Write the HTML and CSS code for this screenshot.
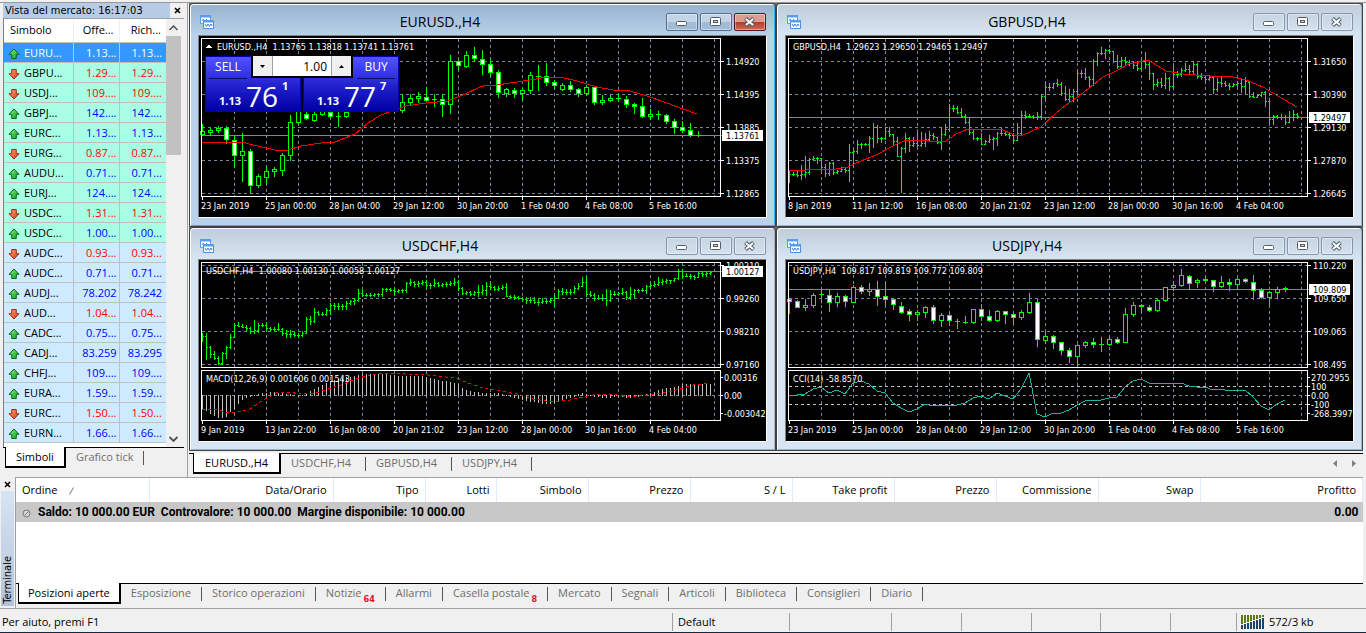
FILE: index.html
```html
<!DOCTYPE html>
<html lang="it">
<head>
<meta charset="utf-8">
<title>Terminale di trading</title>
<link rel="stylesheet" href="styles.css">
</head>
<body>
<svg class="defs" width="0" height="0" aria-hidden="true">
  <defs>
    <linearGradient id="g-up" x1="0" y1="0" x2="1" y2="1"><stop offset="0" stop-color="#8af08a"/><stop offset="1" stop-color="#0a9a1e"/></linearGradient>
    <linearGradient id="g-down" x1="0" y1="0" x2="1" y2="1"><stop offset="0" stop-color="#ffa078"/><stop offset="1" stop-color="#d83a10"/></linearGradient>
    <symbol id="up" viewBox="0 0 12 12"><path d="M6 1 11 6.300H8.300V10.500H3.700V6.300H1z" fill="url(#g-up)" stroke="#0b6b17" stroke-linejoin="round"/></symbol>
    <symbol id="down" viewBox="0 0 12 12"><path d="M6 11 11 5.700H8.300V1.500H3.700V5.700H1z" fill="url(#g-down)" stroke="#a03010" stroke-linejoin="round"/></symbol>
    <symbol id="chart" viewBox="0 0 14 14">
      <path d="M.5 1.500h10v7H.5z" fill="#fff" stroke="#5b9be8"/><path d="M0 0h11v2.500H0z" fill="#5b9be8"/><path d="M2 5h1l1-1M6 4l1 1" stroke="#3d7fe0" fill="none"/>
      <path d="M3.500 6h10v7.500h-10z" fill="#fff" stroke="#4d8ee6"/><path d="M3 5h11v2.500H3z" fill="#5b9be8"/><path d="M5 9l1.500 2.500L8 9l1.500 2.500L11 9l1 2" stroke="#3d7fe0" fill="none"/>
    </symbol>
    <symbol id="min" viewBox="0 0 30 16"><rect x="9.500" y="7.500" width="10" height="4" rx="1" fill="#fff" stroke="#555b66"/></symbol>
    <symbol id="max" viewBox="0 0 30 16"><rect x="9.500" y="3.500" width="10" height="8" rx="1" fill="#fff" stroke="#555b66"/><rect x="12.500" y="6.500" width="4" height="2" fill="#c5d2e0" stroke="#555b66"/></symbol>
    <symbol id="close" viewBox="0 0 30 16"><path d="M10.500 4.500 18.500 11.500M18.500 4.500 10.500 11.500" stroke="#555b66" stroke-width="4"/><path d="M10.900 4.900 18.100 11.100M18.100 4.900 10.900 11.100" stroke="#fff" stroke-width="2"/></symbol>
    <symbol id="x" viewBox="0 0 7 7"><path d="M1 1l5 5M6 1 1 6" stroke="#000" stroke-width="1.600"/></symbol>
  </defs>
</svg>

<div class="app">
  <div class="toolbar-edge"></div>
  <main class="workspace">
    <aside class="watch">
      <div class="watch-title"><span>Vista del mercato: 16:17:03</span><button type="button" aria-label="Chiudi"><svg width="7" height="7"><use href="#x"/></svg></button></div>
      <div class="watch-body">
        <table class="watch-table">
          <colgroup><col class="c-symbol"><col class="c-bid"><col class="c-ask"></colgroup>
          <thead><tr><th>Simbolo</th><th>Offe...</th><th>Rich...</th></tr></thead>
          <tbody id="quotes"></tbody>
        </table>
        <div class="scroll">
          <svg width="9" height="6" viewBox="0 0 9 6"><path d="M.5 5 4.500 1l4 4" fill="none" stroke="#505050" stroke-width="1.500"/></svg>
          <div class="thumb"></div>
          <svg width="9" height="6" viewBox="0 0 9 6"><path d="M.5 1 4.500 5l4-4" fill="none" stroke="#505050" stroke-width="1.800"/></svg>
        </div>
      </div>
      <nav class="tabs watch-tabs"><button type="button" class="tab on">Simboli</button><button type="button" class="tab">Grafico tick</button></nav>
    </aside>

    <section class="charts">
      <div class="windows">
        <article class="win active">
          <header><svg class="wicon" width="14" height="14"><use href="#chart"/></svg><h2>EURUSD.,H4</h2><div class="wbtns"><button type="button" aria-label="Riduci"><svg><use href="#min"/></svg></button><button type="button" aria-label="Ingrandisci"><svg><use href="#max"/></svg></button><button type="button" class="wclose" aria-label="Chiudi"><svg><use href="#close"/></svg></button></div></header>
          <div class="frame">
            <svg class="plot" id="eurusd"></svg>
            <div class="trade">
              <button type="button" class="deal"><span class="side">SELL</span><span class="quote">1.13 <b>76</b><sup>1</sup></span></button>
              <button type="button" class="deal buy"><span class="side">BUY</span><span class="quote">1.13 <b>77</b><sup>7</sup></span></button>
              <div class="volume"><button type="button" aria-label="Diminuisci"><svg width="5" height="3"><path d="M0 0h5L2.500 3z"/></svg></button><input type="text" value="1.00" aria-label="Volume"><button type="button" aria-label="Aumenta"><svg width="5" height="3"><path d="M0 3h5L2.500 0z"/></svg></button></div>
            </div>
          </div>
        </article>
        <article class="win">
          <header><svg class="wicon" width="14" height="14"><use href="#chart"/></svg><h2>GBPUSD,H4</h2><div class="wbtns"><button type="button" aria-label="Riduci"><svg><use href="#min"/></svg></button><button type="button" aria-label="Ingrandisci"><svg><use href="#max"/></svg></button><button type="button" aria-label="Chiudi"><svg><use href="#close"/></svg></button></div></header>
          <div class="frame"><svg class="plot" id="gbpusd"></svg></div>
        </article>
        <article class="win">
          <header><svg class="wicon" width="14" height="14"><use href="#chart"/></svg><h2>USDCHF,H4</h2><div class="wbtns"><button type="button" aria-label="Riduci"><svg><use href="#min"/></svg></button><button type="button" aria-label="Ingrandisci"><svg><use href="#max"/></svg></button><button type="button" aria-label="Chiudi"><svg><use href="#close"/></svg></button></div></header>
          <div class="frame"><svg class="plot" id="usdchf"></svg></div>
        </article>
        <article class="win">
          <header><svg class="wicon" width="14" height="14"><use href="#chart"/></svg><h2>USDJPY,H4</h2><div class="wbtns"><button type="button" aria-label="Riduci"><svg><use href="#min"/></svg></button><button type="button" aria-label="Ingrandisci"><svg><use href="#max"/></svg></button><button type="button" aria-label="Chiudi"><svg><use href="#close"/></svg></button></div></header>
          <div class="frame"><svg class="plot" id="usdjpy"></svg></div>
        </article>
      </div>
      <nav class="tabs chart-tabs">
        <button type="button" class="tab on">EURUSD.,H4</button><button type="button" class="tab">USDCHF,H4</button><button type="button" class="tab">GBPUSD,H4</button><button type="button" class="tab">USDJPY,H4</button>
        <span class="arrows"><svg width="4" height="7"><path d="M4 0v7L0 3.500z" fill="#808080"/></svg><svg width="4" height="7"><path d="M0 0v7l4-3.500z" fill="#808080"/></svg></span>
      </nav>
    </section>
  </main>

  <section class="terminal">
    <div class="side-strip"><button type="button" aria-label="Chiudi terminale"><svg width="7" height="7"><use href="#x"/></svg></button><div class="side-name"><span>Terminale</span></div></div>
    <div class="terminal-main">
      <div class="orders-area">
        <table class="orders">
          <colgroup><col class="w133"><col class="w184"><col class="w92"><col class="w71"><col class="w92"><col class="w102"><col class="w102"><col class="w102"><col class="w102"><col class="w102"><col class="w102"><col></colgroup>
          <thead><tr><th class="first">Ordine<svg class="sort" width="5" height="8"><path d="M.5 7.500 4.500.5" stroke="#777"/></svg></th><th>Data/Orario</th><th>Tipo</th><th>Lotti</th><th>Simbolo</th><th>Prezzo</th><th>S / L</th><th>Take profit</th><th>Prezzo</th><th>Commissione</th><th>Swap</th><th>Profitto</th></tr></thead>
          <tbody><tr><td class="balance" colspan="11"><svg class="dot" width="9" height="9" viewBox="0 0 9 9"><circle cx="4.500" cy="4.500" r="3.500" fill="#d6d6d6" stroke="#777"/><path d="M2.500 6.500l4-4" stroke="#777"/></svg>Saldo: 10 000.00 EUR&nbsp; Controvalore: 10 000.00&nbsp; Margine disponibile: 10 000.00</td><td class="profit">0.00</td></tr></tbody>
        </table>
      </div>
      <nav class="tabs term-tabs">
        <button type="button" class="tab on">Posizioni aperte</button><button type="button" class="tab">Esposizione</button><button type="button" class="tab">Storico operazioni</button><button type="button" class="tab">Notizie<sub>64</sub></button><button type="button" class="tab">Allarmi</button><button type="button" class="tab">Casella postale<sub>8</sub></button><button type="button" class="tab">Mercato</button><button type="button" class="tab">Segnali</button><button type="button" class="tab">Articoli</button><button type="button" class="tab">Biblioteca</button><button type="button" class="tab">Consiglieri</button><button type="button" class="tab">Diario</button>
      </nav>
    </div>
  </section>

  <footer class="status">
    <span class="help">Per aiuto, premi F1</span><span class="profile">Default</span><span class="s102"></span><span class="s71"></span><span class="s71"></span><span class="s68"></span><span class="s71"></span><span class="s66"></span>
    <span class="net"><svg id="signal" width="24" height="14"></svg>572/3 kb</span>
  </footer>
</div>
<script src="charts.js"></script>
</body>
</html>
```
FILE: styles.css
```css
* { box-sizing: border-box; }
body { margin: 0; background: #f0f0f0; color: #000; font: 11px/16px "Open Sans", "Noto Sans", sans-serif; }
button { font: inherit; color: inherit; padding: 0; border: 0; background: none; }
.defs { position: absolute; }
.app { display: flex; flex-direction: column; min-height: 100vh; border-bottom: 1px solid #14283c; }
.toolbar-edge { height: 3px; background: #f0f0f0; border-bottom: 1px solid #9a9a9a; }
.workspace { display: flex; }

/* market watch */
.watch { flex: 0 0 188px; display: flex; flex-direction: column; padding-left: 3px; padding-right: 3px; border-right: 1px solid #a0a0a0; }
.watch-title { display: flex; height: 15px; font: 11px/15px "DejaVu Sans Condensed", sans-serif; }
.watch-title span { flex: 1; padding-left: 2px; background: #b6cce6; white-space: nowrap; }
.watch-title button { width: 14px; display: grid; place-items: center; }
.watch-body { flex: 1; display: flex; border-left: 1px solid #808080; border-top: 1px solid #a0a0a0; background: #fff; }
.watch-table { width: 162px; table-layout: fixed; border-collapse: collapse; font-size: 11px; align-self: flex-start; }
.c-symbol { width: 69px; }
.c-bid { width: 46px; }
.c-ask { width: 47px; }
.watch-table th { height: 23px; padding: 0 5px 0 6px; font-weight: 400; text-align: left; border-bottom: 1px solid #c0c0c0; border-right: 1px solid #e8f0f8; }
.watch-table th + th { text-align: right; }
.watch-table th:last-child { border-right: 0; }
.watch-table td { height: 20px; padding: 0 2px 0 0; line-height: 19px; white-space: nowrap; text-align: right; border: 0 solid #c0c0c0; border-width: 0 1px 1px 0; background: #a9ffe3; }
.watch-table td:first-child { text-align: left; }
.watch-table td:last-child { border-right: 0; padding-right: 4px; }
.watch-table svg { width: 12px; height: 12px; margin: 0 4px 0 4px; vertical-align: -3px; }
.watch-table tr.blue td { background: #cdeaff; }
.watch-table tr.sel td { background: #3399ff; color: #fff; }
.watch-table tr.rise td + td { color: #0000ff; }
.watch-table tr.fall td + td { color: #ff0000; }
.watch-table tr.sel td + td { color: #fff; }
.scroll { flex: 1; display: flex; flex-direction: column; align-items: center; padding: 6px 3px 5px 0; background: #f0f0f0; }
.thumb { width: 15px; height: 119px; margin-top: 5px; background: #c1c1c1; }
.scroll svg:last-child { margin-top: auto; }

/* tab strips */
.tabs { display: flex; border-top: 1px solid #000; color: #6e6e6e; line-height: 18px; }
.tab { padding: 0 11px 3px 10px; height: 19px; white-space: nowrap; position: relative; }
.tab:not(.on)::after { content: ""; position: absolute; right: 0; top: 3px; bottom: 2px; width: 1px; background: #555; }
.tab.on { margin-top: -1px; height: 21px; padding: 0 9px; border: 1px solid #000; border-top: 0; border-bottom-width: 2px; border-right-width: 2px; background: #fff; color: #000; }
.tab sub { position: relative; top: 5px; margin-left: 2px; vertical-align: baseline; font: bold 9px/9px "DejaVu Sans Condensed", sans-serif; color: #e81123; }
.watch-tabs { height: 30px; padding-left: 2px; }
.watch-tabs .tab.on { padding: 0 10px; }
.term-tabs { height: 25px; padding-left: 2px; }

/* chart windows */
.charts { flex: 1; min-width: 0; padding: 0 3px 0 1px; background: #f0f0f0; }
.windows { display: grid; grid-template-columns: 1fr 1fr; background: #666; margin-bottom: 2px; }
.win { min-width: 0; display: flex; flex-direction: column; padding: 0 8px 8px; border: 1px solid #3e4247; box-shadow: inset 1px 1px #fff, inset -1px -1px #9fb4c8; border-radius: 4px 4px 0 0; background: linear-gradient(#bfcdda, #d7e4f2 31px); }
.win.active { box-shadow: inset 1px 1px #fff, inset -1px -1px #2fb6d8; background: linear-gradient(#98b2cf, #b9d1ea 31px); }
.win header { display: flex; align-items: center; height: 31px; padding: 5px 1px 0 2px; }
.wicon { flex: none; }
.win h2 { flex: 1; margin: 0; text-align: center; font-size: 14px; font-weight: 400; line-height: 20px; }
.wbtns { display: flex; gap: 2px; }
.wbtns button { width: 32px; height: 18px; border: 1px solid #8496ad; border-radius: 2px; box-shadow: inset 0 0 0 1px #ffffff66; }
.active .wbtns button { border-color: #53708f; background: linear-gradient(#c2d4e6 50%, #a3bcd6 50%); }
.active .wbtns .wclose { border-color: #5a1320; background: linear-gradient(#dc9c90 50%, #b8382c 50%, #d06a50); }
.wbtns svg { display: block; width: 30px; height: 16px; }
.frame { position: relative; border: 1px solid #808080; border-right-color: #fff; border-bottom-color: #fff; background: #000; }
.plot { display: block; width: 100%; height: 181px; font: 9px "DejaVu Sans Condensed", "DejaVu Sans", sans-serif; fill: #fff; shape-rendering: crispEdges; }
.plot text { white-space: pre; }
.chart-tabs { padding-left: 4px; height: 24px; }
.chart-tabs .tab { padding: 0 15px 3px 10px; }
.chart-tabs .tab.on { padding: 0 11px; }
.arrows { margin-left: auto; display: flex; align-items: center; gap: 15px; padding: 0 7px 5px 0; }

/* one-click trading */
.trade { position: absolute; left: 6px; top: 20px; display: flex; gap: 2px; background: #000; color: #fff; }
.deal { width: 96px; height: 56px; display: flex; flex-direction: column; justify-content: space-between; border: 1px solid #0000b0; background: linear-gradient(#5252ff, #2020cc 55%, #0000a4); text-align: left; }
.side { width: 38px; margin-left: 3px; height: 22px; line-height: 20px; font-size: 12px; text-align: center; border-bottom: 1px solid #0b0b70; }
.buy .side { align-self: flex-end; margin-right: 3px; }
.quote { display: flex; align-items: flex-end; height: 32px; padding-left: 13px; font: bold 11px/20px "Open Sans", sans-serif; }
.quote b { margin-left: 5px; font-size: 28px; font-weight: 400; line-height: 30px; }
.quote sup { align-self: flex-start; margin: -1px 0 0 4px; font-size: 11px; line-height: 16px; }
.volume { position: absolute; left: 46px; top: 0; display: flex; width: 102px; height: 22px; border: 2px solid #000; border-top: 0; }
.volume button { width: 19px; display: grid; place-items: center; background: #f0f0f0; }
.volume input { flex: 1; min-width: 0; padding: 0 4px 0 0; border: 1px solid #a0a0a0; border-width: 0 1px; text-align: right; font: 12px "Open Sans", sans-serif; }

/* terminal */
.terminal { flex: 1; display: flex; padding-right: 3px; border-bottom: 1px solid #a0a0a0; }
.side-strip { width: 16px; display: flex; flex-direction: column; padding: 0 1px 2px; border-right: 1px solid #a0a0a0; }
.side-strip button { height: 14px; display: grid; place-items: center; }
.side-name { flex: 1; display: flex; align-items: flex-end; justify-content: center; padding-bottom: 2px; background: linear-gradient(#d6e4f4, #b4c4d8); }
.side-name span { writing-mode: vertical-rl; transform: rotate(180deg); font: 11px/12px "DejaVu Sans Condensed", sans-serif; }
.terminal-main { flex: 1; min-width: 0; display: flex; flex-direction: column; border-top: 1px solid #a0a0a0; }
.orders-area { flex: 1; background: #fff; }
.orders { width: 100%; table-layout: fixed; border-collapse: collapse; }
.w133 { width: 133px; }
.w184 { width: 184px; }
.w92 { width: 92px; }
.w71 { width: 71px; }
.w102 { width: 102px; }
.orders th { height: 24px; padding: 0 6px; font-weight: 400; text-align: right; white-space: nowrap; border-right: 1px solid #e2ecf8; }
.orders th.first { text-align: left; }
.sort { margin-left: 12px; vertical-align: -1px; }
.orders td { height: 20px; padding: 0 4px 0 6px; font: 700 12px/20px Roboto, "Open Sans", sans-serif; background: #c8c8c8; }
.dot { margin-right: 7px; vertical-align: -2px; }
.orders .profit { text-align: right; }

/* status bar */
.status { display: flex; height: 23px; padding: 4px 0 1px; line-height: 18px; }
.status span { border-left: 1px solid #a0a0a0; }
.status .help { flex: 1; padding-left: 2px; border: 0; }
.status .profile { width: 117px; padding-left: 5px; }
.s102 { width: 102px; }
.s71 { width: 70px; }
.s68 { width: 69px; }
.s66 { width: 66px; }
.status .net { width: 130px; display: flex; align-items: center; gap: 4px; padding-left: 4px; }
```
FILE: charts.js
```js
const NS = 'http://www.w3.org/2000/svg';
const LIME = '#00ff00', GRID = '#778899';

function add(svg, tag, attrs, text) {
  const e = document.createElementNS(NS, tag);
  for (const k in attrs) e.setAttribute(k, attrs[k]);
  if (text !== undefined) e.textContent = text;
  svg.appendChild(e);
}
const rect = (s, x, y, w, h, fill) => add(s, 'rect', { x, y, width: w, height: h, fill });
const label = (s, x, y, t, fill) => add(s, 'text', { x, y, fill: fill || '#fff' }, t);

// Grid, panes, axes; every plot is 519px wide and 158px high.
function base(id, o) {
  const s = document.getElementById(id);
  const dash = (x1, y1, x2, y2, c) => add(s, 'line', { x1, y1, x2, y2, stroke: c || GRID, 'stroke-dasharray': '3 3' });
  for (let x = 35; x < 520; x += 32) dash(x + .5, 3, x + .5, 160);
  o.prices.forEach(p => dash(3, p[1] + .5, 521, p[1] + .5));
  (o.levels || []).forEach(l => dash(3, l[0] + .5, 521, l[0] + .5, l[1]));
  rect(s, 3, o.bid[1], 520, 1, GRID);
  return s;
}
function finish(s, o) {
  const box = (y, h) => add(s, 'rect', { x: 2.5, y: y + .5, width: 519, height: h, fill: 'none', stroke: '#fff' });
  if (o.sub) {
    box(2, 105);
    box(110, 50);
    rect(s, 0, 108, 567, 2, '#000');
    o.sub.labels.forEach(l => { rect(s, 522, l[1], 2, 1, '#fff'); label(s, 525, l[1] + 4, l[0]); });
    label(s, 7, 122, o.sub.title);
  } else box(2, 158);
  o.prices.forEach(p => { rect(s, 522, p[1], 3, 1, '#fff'); label(s, 527, p[1] + 4, p[0]); });
  rect(s, 523, o.bid[1] - 5, 41, 11, '#fff');
  label(s, 527, o.bid[1] + 4, o.bid[0], '#000');
  o.times.forEach((t, i) => { rect(s, 3 + 64 * i, 160, 1, 4, '#fff'); label(s, 2 + 64 * i, 173, t); });
  label(s, o.titleX || 7, 14, o.title);
}
const line = (s, pts, color, extra) => add(s, 'polyline', Object.assign({ points: pts, fill: 'none', stroke: color }, extra));

// Candle: high, body top, body bottom, low; kind u = rising, f = falling, d = doji
function candles(s, data) {
  data.trim().split(/\s+/).forEach((c, i) => {
    if (c === '-') return;
    const [h, t, b, l] = c.slice(1).split(',').map(Number), x = 3 + 8 * i, k = c[0];
    rect(s, x, h, 1, l - h + 1, LIME);
    if (k === 'd') { rect(s, x - 2, t, 5, 1, LIME); return; }
    rect(s, x - 2, t, 5, b - t + 1, LIME);
    rect(s, x - 1, t + 1, 3, b - t - 1, k === 'u' ? '#000' : '#fff');
  });
}
// Bar: high, low, close
function bars(s, data) {
  let prev = null;
  data.trim().split(/\s+/).forEach((c, i) => {
    const [h, l, cl] = c.split(',').map(Number), x = 3 + 4 * i;
    rect(s, x, h, 1, l - h + 1, LIME);
    rect(s, x + 1, cl, 1, 1, LIME);
    if (prev !== null) rect(s, x - 1, Math.min(Math.max(prev, h), l), 1, 1, LIME);
    prev = cl;
  });
}

const T1 = ['23 Jan 2019', '25 Jan 00:00', '28 Jan 04:00', '29 Jan 12:00', '30 Jan 20:00', '1 Feb 04:00', '4 Feb 08:00', '5 Feb 16:00'];
const T2 = ['11 Jan 12:00', '16 Jan 08:00', '20 Jan 21:02', '23 Jan 12:00', '28 Jan 00:00', '30 Jan 16:00', '4 Feb 04:00'];

// EURUSD
let o = { title: 'EURUSD.,H4  1.13765 1.13818 1.13741 1.13761', titleX: 18, bid: ['1.13761', 99], times: T1,
  prices: [['1.14920', 25], ['1.14395', 58], ['1.13885', 91], ['1.13375', 124], ['1.12865', 157]] };
let s = base('eurusd', o);
candles(s, `u88,95,98,99 u92,94,96,99 u90,92,94,96 f90,92,103,107 f99,104,119,130 u97,115,119,145 f113,115,149,156 u138,140,149,151
 u131,135,141,146 u131,133,135,140 u117,119,134,139 u79,86,119,124 u70,74,86,87 f74,78,82,83 u74,78,84,85 u70,75,78,79 f72,76,80,81 d72,80,81,90 u72,76,80,81
 - - - - - - u58,66,74,76 u58,62,66,69 u56,60,62,66 f51,61,64,66 d58,63,64,70 f58,63,68,80 u19,25,68,77 f24,25,29,33 u15,19,30,31 f11,19,22,24 f14,23,28,38
 f23,28,36,39 f34,36,56,61 u52,53,57,60 f52,54,57,61 u52,54,57,63 u36,39,54,57 d29,40,41,54 f27,40,46,49 f44,46,49,52 u47,49,53,54 f45,49,53,55 f52,53,57,60
 u49,51,57,59 f50,51,66,68 u59,64,66,68 u59,62,64,65 d58,62,63,64 f60,63,68,71 f67,68,70,77 f62,70,80,81 u73,78,80,83 d75,78,79,83 f78,79,85,87 f83,85,91,97
 f85,91,94,96 f87,94,99,100 d95,99,100,100`);
line(s, '3,107 11,106 44,106 50,108 76,114 89,114 102,110 122,107 136,106 156,98 169,87 182,79 207,70 227,67 249,65 266,58 281,51 288,49 298,49 311,47 331,44 348,41 361,41 378,45 398,51 414,54 431,55 448,60 468,67 484,73 498,78', '#f00');
add(s, 'path', { d: 'M6 12h7L9.500 8.500z', fill: '#fff' });
finish(s, o);

// GBPUSD
o = { title: 'GBPUSD,H4  1.29623 1.29650 1.29465 1.29497', bid: ['1.29497', 81], times: ['8 Jan 2019', ...T2],
  prices: [['1.31650', 25], ['1.30390', 58], ['1.29130', 91], ['1.27870', 124], ['1.26645', 157]] };
s = base('gbpusd', o);
bars(s, `134,146,138 136,139,138 135,140,139 129,143,138 120,141,136 122,138,123 120,124,122 121,127,122 122,134,131 128,140,137 126,139,127 126,138,136
 134,137,135 131,135,133 131,136,134 108,145,116 113,130,115 104,117,108 107,112,108 107,109,108 100,116,102 87,111,91 89,106,102 101,106,102 91,103,95 91,100,98 98,109,105 101,120,120
 111,156,112 97,116,102 101,115,109 101,110,107 96,110,109 96,110,107 97,110,103 95,104,99 97,103,100 101,107,106 91,113,98 88,99,93 68,94,72 69,75,72 70,77,76 72,81,80 78,87,86 82,98,96
 93,103,102 101,104,102 97,108,108 104,108,105 99,106,103 101,113,102 96,109,97 92,99,97 95,99,98 96,102,99 97,106,104 87,104,97 75,98,79 75,82,80 78,81,80 79,82,81 76,83,80 59,83,60
 46,65,51 47,54,51 47,52,47 43,50,48 46,59,57 50,64,63 53,65,60 53,65,55 34,58,37 34,41,37 32,43,41 40,51,43 23,49,25 16,29,17 11,18,17 13,22,14 13,17,15 15,26,25 19,32,30 21,32,24
 21,29,26 24,29,27 25,32,29 27,34,32 21,33,25 16,32,28 25,43,37 37,53,48 43,50,46 42,51,49 37,52,42 41,54,50 30,53,38 35,41,38 32,40,34 27,35,33 29,37,35 26,37,28 27,42,40 37,43,41
 39,47,43 39,44,41 41,57,53 42,55,46 41,50,47 45,50,49 47,53,50 47,50,48 46,50,47 43,56,50 41,57,45 46,61,60 56,61,61 58,61,59 56,60,56 55,70,65 62,87,83 79,88,80 79,82,81 78,83,81
 79,88,86 75,86,81 74,84,78 77,82,80`);
line(s, '3,134 20,134 30,133 50,133 62,131 70,127 90,119 107,110 118,105 130,104 143,105 160,105 170,98 182,93 215,93 228,99 235,100 255,91 270,77 280,69 293,60 317,41 330,35 343,28 362,24 380,35 397,38 423,40 447,41 460,44 477,51 497,63 511,71', '#f00');
finish(s, o);

// USDCHF with MACD
o = { title: 'USDCHF,H4  1.00080 1.00130 1.00058 1.00127', bid: ['1.00127', 11], times: ['9 Jan 2019', '13 Jan 22:00', ...T2.slice(1)],
  prices: [['1.00210', 5], ['0.99260', 38], ['0.98210', 71], ['0.97160', 104]], levels: [[135, GRID]],
  sub: { title: 'MACD(12,26,9) 0.001606 0.001543', labels: [['0.00316', 117], ['0.00', 135], ['-0.003042', 153]] } };
s = base('usdchf', o);
bars(s, `73,81,76 73,99,87 86,97,94 91,99,98 96,104,103 92,104,93 86,98,87 74,88,77 63,77,65 62,66,66 64,67,67 65,70,68 67,73,71 60,73,70 63,72,65 63,66,65 62,70,68 67,70,69 67,70,69
 63,70,69 68,75,73 70,77,74 70,77,74 72,76,75 73,77,75 71,76,73 57,73,59 56,64,61 48,62,52 51,55,54 52,55,54 48,55,50 43,54,45 43,49,46 43,49,46 44,49,46 41,49,43 40,44,41 38,44,40
 29,41,33 30,36,35 33,36,35 33,36,35 33,36,34 33,36,34 28,36,29 28,31,29 28,31,30 28,34,31 29,32,30 29,32,30 22,32,23 19,25,22 21,26,24 21,26,23 20,24,22 20,28,25 23,28,25 19,26,23
 22,26,25 23,26,24 22,26,24 21,25,23 18,25,22 20,30,28 27,34,33 31,34,32 31,35,34 31,35,32 25,36,32 25,34,30 22,35,26 23,29,27 26,30,29 26,30,28 25,29,27 23,36,36 35,38,37 35,39,37
 36,39,38 37,41,39 37,43,40 37,42,40 37,43,42 39,45,42 38,43,41 39,43,41 38,42,40 35,45,38 29,38,31 28,34,32 29,34,32 29,34,32 26,33,28 23,29,26 17,26,22 17,36,34 31,36,35 33,40,38
 35,39,38 34,40,38 29,45,40 30,41,34 31,35,34 32,34,33 28,34,32 31,39,37 27,39,34 29,37,30 29,32,30 28,31,30 25,33,26 23,27,25 21,26,24 17,25,22 19,24,21 19,23,20 20,23,20 18,21,18
 9,19,11 9,18,16 13,16,16 14,18,16 15,19,17 12,17,13 11,16,14 11,16,13 11,14,12`);
const macd = [[0,148],[1,150],[2,153],[3,155],[4,157],[5,157],[6,156],[7,151],[8,148],[9,143],[10,139],[11,137],[13,135],[15,133],[17,132],[20,133],[23,135],[25,135],[27,131],[28,129],[30,125],[32,121],[35,118],[38,116],[40,114],[45,114],[50,116],[55,116],[58,119],[62,122],[64,124],[65,128],[67,131],[70,133],[74,133],[77,136],[79,138],[81,140],[84,142],[86,143],[88,142],[90,139],[92,137],[94,134],[95,133],[97,135],[101,137],[104,136],[107,137],[110,135],[112,133],[115,129],[118,127],[120,124],[127,124]];
for (let i = 0, j = 0; i < 128; i++) {
  while (macd[j + 1] && macd[j + 1][0] < i) j++;
  const a = macd[j], b = macd[j + 1] || a;
  const y = Math.round(a[1] + (b[1] - a[1]) * (i - a[0]) / ((b[0] - a[0]) || 1));
  rect(s, 3 + 4 * i, Math.min(y, 135), 1, Math.abs(y - 135) + 1, '#c0c0c0');
}
line(s, '3,149 14,149 27,152 39,152 51,149 64,140 77,133 89,132 102,134 117,133 129,129 142,125 156,119 171,115 189,113 206,114 229,115 256,118 272,124 281,127 301,131 318,134 334,139 354,142 371,140 388,136 401,134 418,135 431,137 448,135 464,133 481,129 494,125 510,123', '#f00', { 'stroke-dasharray': '3 3' });
finish(s, o);

// USDJPY with CCI
o = { title: 'USDJPY,H4  109.817 109.819 109.772 109.809', bid: ['109.809', 29], times: T1,
  prices: [['110.220', 5], ['109.650', 38], ['109.065', 71], ['108.495', 104]], levels: [[126, '#c0c0c0'], [135, GRID], [144, '#c0c0c0']],
  sub: { title: 'CCI(14) -58.8570', labels: [['270.2955', 117], ['100', 126], ['0.00', 135], ['-100', 144], ['-268.3997', 153]] } };
s = base('usdjpy', o);
candles(s, `f38,39,41,53 f40,41,47,47 u39,45,47,50 u33,35,45,47 d29,34,35,42 f29,35,42,51 u33,36,42,46 f35,36,41,46 u25,27,42,42 f25,27,31,33 u23,29,31,35
 f21,29,36,45 f22,36,39,44 f38,39,44,49 f42,46,52,53 f49,51,54,60 u50,52,54,60 u46,47,52,57 f45,47,60,63 u53,55,60,66 f52,55,60,62 d59,61,62,68 d56,62,63,63 u49,49,62,63
 f44,49,56,60 f50,56,60,61 u50,51,60,61 f51,51,54,63 f53,54,57,62 u50,52,57,59 u33,42,52,53 f39,42,79,86 u71,76,80,83 f75,76,82,88 f82,82,90,94 f88,90,96,102 u84,85,96,105 u81,82,85,87
 f78,82,84,87 d77,84,85,91 u77,79,84,85 f77,79,82,83 u48,54,82,82 u42,45,54,56 f44,45,46,51 f45,47,50,51 u39,40,50,51 u27,27,40,41 u21,25,27,30 u9,15,25,26 f15,16,23,28 u19,20,22,27
 f16,19,20,22 f20,20,26,31 u16,22,26,27 f19,22,24,30 u18,19,24,28 f18,19,21,22 f15,22,30,39 f28,30,37,38 u31,32,37,44 u27,29,32,38 f27,28,29,31`);
const cci = [135,135,134,129,127,133,130,134,123,121,124,131,133,143,148,152,149,144,146,145,145,145,143,138,136,139,133,136,139,129,113,154,157,153,153,150,145,141,140,140,138,137,127,121,119,123,124,123,124,123,126,127,127,130,129,131,130,130,137,146,150,144,140];
line(s, cci.map((y, i) => (3 + 8 * i) + ',' + y).join(' '), '#20b2aa');
finish(s, o);

// Market watch rows
const quotes = [['u','EURU','1.13...','1.13...'],['d','GBPU','1.29...','1.29...'],['d','USDJ','109....','109....'],['u','GBPJ','142....','142....'],['u','EURC','1.13...','1.13...'],['d','EURG','0.87...','0.87...'],['u','AUDU','0.71...','0.71...'],['u','EURJ','124....','124....'],['d','USDC','1.31...','1.31...'],['u','USDC','1.00...','1.00...'],['d','AUDC','0.93...','0.93...'],['u','AUDC','0.71...','0.71...'],['u','AUDJ','78.202','78.242'],['d','AUD','1.04...','1.04...'],['u','CADC','0.75...','0.75...'],['u','CADJ','83.259','83.295'],['u','CHFJ','109....','109....'],['u','EURA','1.59...','1.59...'],['d','EURC','1.50...','1.50...'],['u','EURN','1.66...','1.66...']];
document.getElementById('quotes').innerHTML = quotes.map((q, i) =>
  `<tr class="${q[0] === 'u' ? 'rise' : 'fall'}${i === 0 ? ' sel' : ''}${i > 9 ? ' blue' : ''}"><td><svg aria-hidden="true"><use href="#${q[0] === 'u' ? 'up' : 'down'}"/></svg>${q[1]}...</td><td>${q[2]}</td><td>${q[3]}</td></tr>`).join('');

// Connection strength meter
const sig = document.getElementById('signal');
for (let i = 0; i < 8; i++) {
  rect(sig, i * 3, 0, 2, 9 - i, '#5c7a12');
  rect(sig, i * 3, 10 - i, 2, 4 + i, '#1c4468');
}
```
